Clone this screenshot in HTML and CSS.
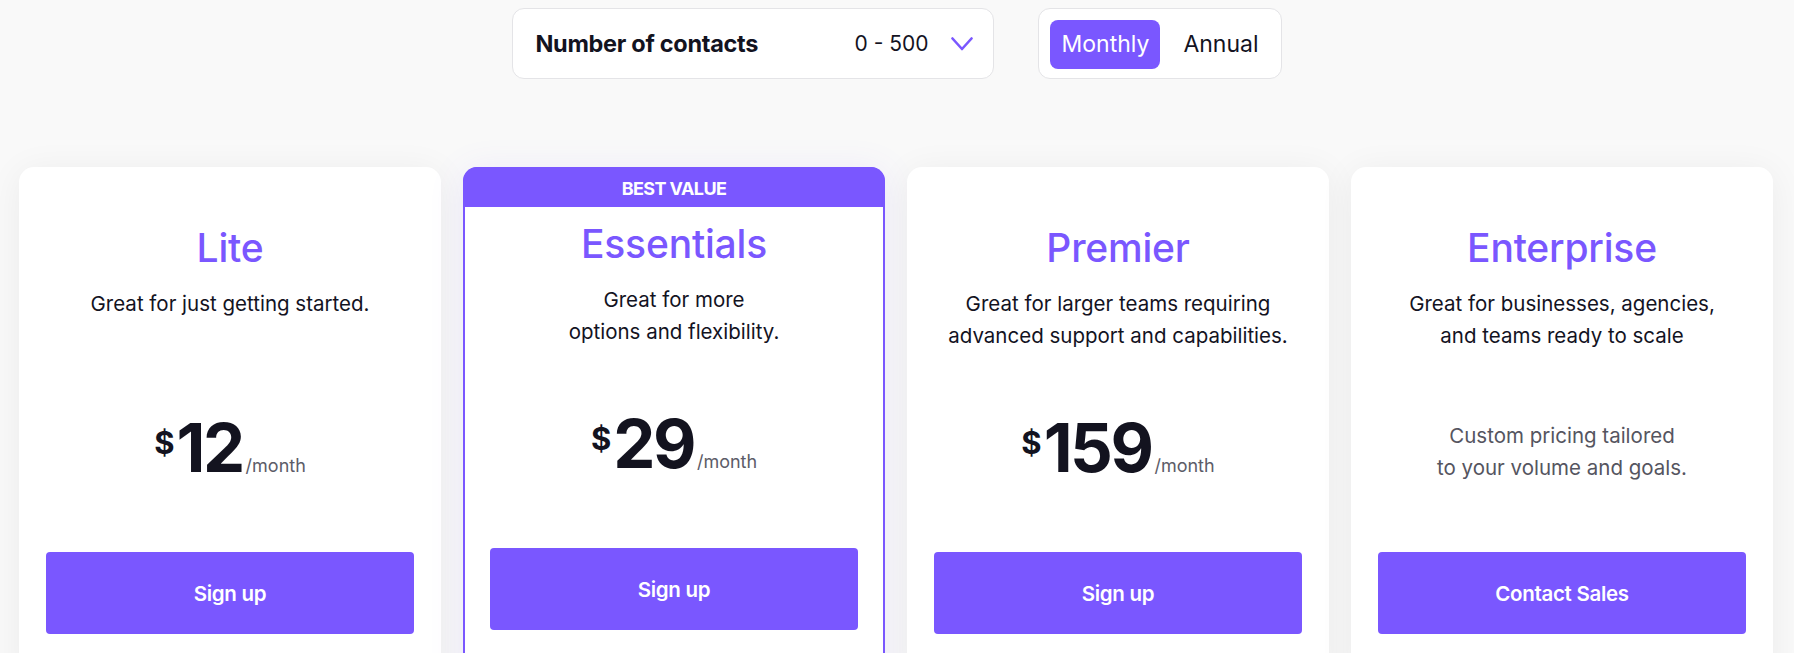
FILE: index.html
```html
<!DOCTYPE html>
<html lang="en">
<head>
<meta charset="utf-8">
<title>Pricing</title>
<link rel="stylesheet" href="styles.css">
</head>
<body>
<main class="page">
  <div class="controls">
    <div class="contacts">
      <span class="contacts-label">Number of contacts</span>
      <span class="contacts-value">
        <span>0 - 500</span>
        <svg class="chevron" width="22" height="14" viewBox="0 0 22 14" aria-hidden="true"><polyline points="1.5,1.5 11,12 20.5,1.5" fill="none" stroke="#7a57ff" stroke-width="2.6" stroke-linecap="round" stroke-linejoin="round"/></svg>
      </span>
    </div>
    <div class="toggle">
      <span class="toggle-btn active">Monthly</span>
      <span class="toggle-btn">Annual</span>
    </div>
  </div>

  <section class="plans">
    <article class="card">
      <div class="card-body">
        <h2 class="plan-name">Lite</h2>
        <p class="plan-desc">Great for just getting started.</p>
        <div class="price-area">
          <div class="price"><span class="cur">$</span><span class="amount">12</span><span class="per">/month</span></div>
        </div>
        <a class="btn">Sign up</a>
      </div>
    </article>

    <article class="card featured">
      <div class="badge">BEST VALUE</div>
      <div class="card-body">
        <h2 class="plan-name">Essentials</h2>
        <p class="plan-desc">Great for more<br>options and flexibility.</p>
        <div class="price-area">
          <div class="price"><span class="cur">$</span><span class="amount">29</span><span class="per">/month</span></div>
        </div>
        <a class="btn">Sign up</a>
      </div>
    </article>

    <article class="card">
      <div class="card-body">
        <h2 class="plan-name">Premier</h2>
        <p class="plan-desc">Great for larger teams requiring<br>advanced support and capabilities.</p>
        <div class="price-area">
          <div class="price"><span class="cur">$</span><span class="amount">159</span><span class="per">/month</span></div>
        </div>
        <a class="btn">Sign up</a>
      </div>
    </article>

    <article class="card">
      <div class="card-body">
        <h2 class="plan-name">Enterprise</h2>
        <p class="plan-desc">Great for businesses, agencies,<br>and teams ready to scale</p>
        <div class="price-area">
          <p class="custom">Custom pricing tailored<br>to your volume and goals.</p>
        </div>
        <a class="btn">Contact Sales</a>
      </div>
    </article>
  </section>
</main>
</body>
</html>
```

FILE: styles.css
```css
html, body {
  margin: 0;
  padding: 0;
  overflow: hidden;
}

body {
  background: #f9f9f9;
  font-family: Inter, "Noto Sans", "Liberation Sans", sans-serif;
  color: #13131f;
}

.page {
  padding-top: 8px;
}

.controls {
  display: flex;
  justify-content: center;
  gap: 44px;
}

.contacts {
  box-sizing: border-box;
  width: 482px;
  height: 71px;
  display: flex;
  align-items: center;
  justify-content: space-between;
  padding: 0 20px 0 22px;
  background: #fff;
  border: 1px solid #e4e4e7;
  border-radius: 12px;
}

.contacts-label {
  font-size: 23.5px;
  font-weight: 700;
  letter-spacing: -0.3px;
}

.contacts-value {
  display: flex;
  align-items: center;
  gap: 23px;
  font-size: 21px;
}

.chevron {
  display: block;
}

.toggle {
  box-sizing: border-box;
  height: 71px;
  display: flex;
  align-items: center;
  gap: 12px;
  padding: 1px 11px 0 11px;
  background: #fff;
  border: 1px solid #e4e4e7;
  border-radius: 12px;
}

.toggle-btn {
  height: 49px;
  display: flex;
  align-items: center;
  padding: 0 11px;
  font-size: 23px;
  border-radius: 8px;
  color: #13131f;
}

.toggle-btn.active {
  background: #7a57ff;
  color: #fff;
}

.plans {
  display: grid;
  grid-template-columns: repeat(4, 1fr);
  gap: 22px;
  padding: 0 21px 0 19px;
  margin-top: 88px;
}

.card {
  background: #fff;
  border-radius: 15px;
  box-shadow: 0 4px 36px rgba(20, 20, 40, 0.06);
  height: 520px;
}

.card-body {
  padding: 57px 27px 0;
  display: flex;
  flex-direction: column;
  align-items: center;
  text-align: center;
}

.featured {
  border: 2px solid #7a57ff;
  box-shadow: 0 4px 36px rgba(122, 87, 255, 0.1);
}

.featured .card-body {
  padding-top: 13px;
  padding-left: 25px;
  padding-right: 25px;
}

.badge {
  height: 38px;
  margin: -2px -2px 0;
  padding-top: 2px;
  background: #7a57ff;
  border-radius: 14px 14px 0 0;
  color: #fff;
  font-size: 18px;
  font-weight: 700;
  letter-spacing: -0.6px;
  display: flex;
  align-items: center;
  justify-content: center;
}

.plan-name {
  margin: 0;
  font-size: 39px;
  line-height: 48px;
  font-weight: 500;
  color: #7a57ff;
  letter-spacing: -0.2px;
}

.plan-desc {
  margin: 16px 0 0;
  font-size: 20.5px;
  line-height: 32px;
  min-height: 64px;
  color: #13131f;
}

.price-area {
  height: 200px;
  width: 100%;
  display: flex;
  align-items: center;
  justify-content: center;
}

.price {
  display: flex;
  align-items: baseline;
  margin-bottom: 8px;
}

.cur {
  align-self: flex-start;
  font-size: 31px;
  font-weight: 700;
  line-height: 1;
  margin-top: 12px;
  margin-right: 2px;
}

.amount {
  font-size: 67px;
  line-height: 66px;
  font-weight: 700;
  letter-spacing: -2.5px;
}

.per {
  font-size: 18px;
  color: #5c5c68;
  margin-left: 3px;
}

.custom {
  margin: 0;
  font-size: 20.5px;
  line-height: 32px;
  color: #55555f;
}

.btn {
  box-sizing: border-box;
  width: 100%;
  height: 82px;
  display: flex;
  align-items: center;
  justify-content: center;
  background: #7a57ff;
  color: #fff;
  border-radius: 4px;
  font-size: 20.5px;
  font-weight: 600;
  letter-spacing: -0.3px;
  cursor: pointer;
}
```
